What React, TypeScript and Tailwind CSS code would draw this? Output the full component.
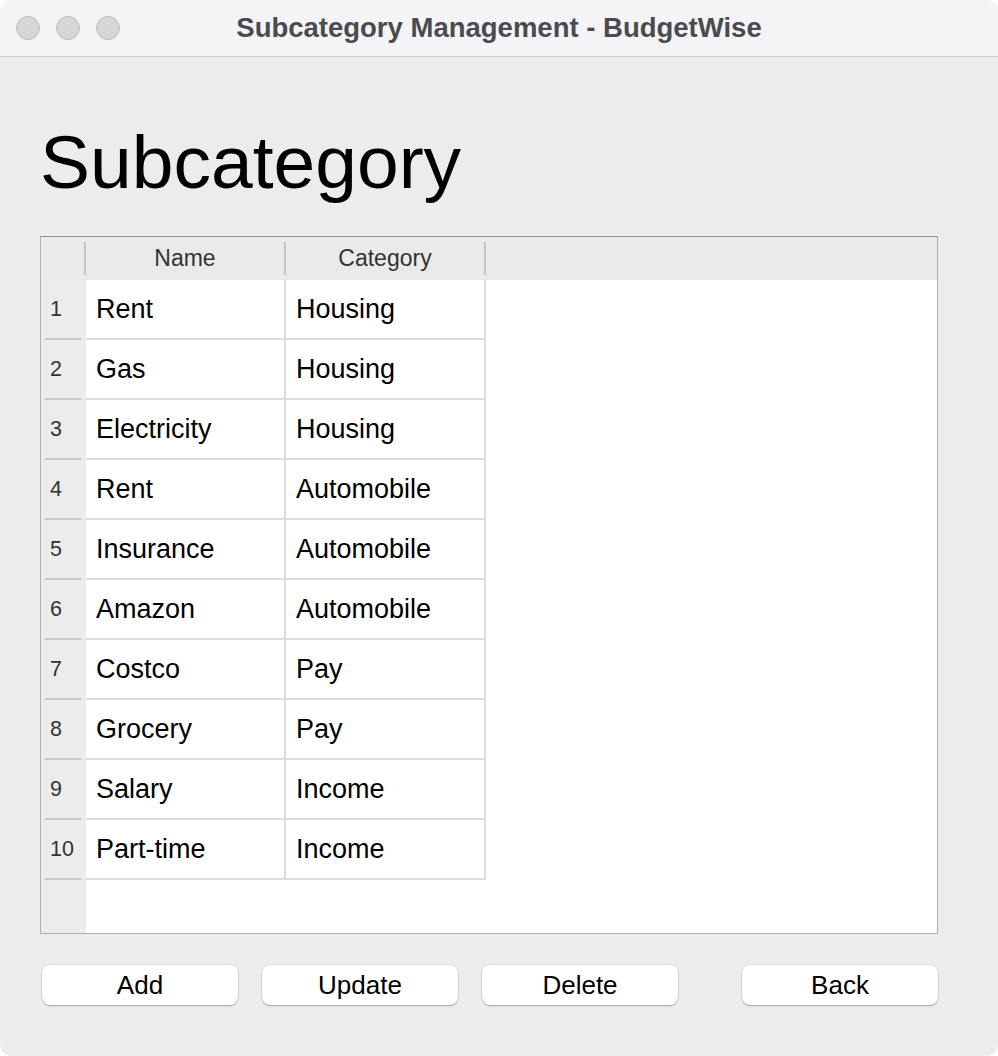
import React from "react";

const ROWS: [string, string][] = [
  ["Rent", "Housing"],
  ["Gas", "Housing"],
  ["Electricity", "Housing"],
  ["Rent", "Automobile"],
  ["Insurance", "Automobile"],
  ["Amazon", "Automobile"],
  ["Costco", "Pay"],
  ["Grocery", "Pay"],
  ["Salary", "Income"],
  ["Part-time", "Income"],
];

const FONT = { fontFamily: "'Liberation Sans', Arial, sans-serif" };

function Button({ label }: { label: string }) {
  return (
    <button className="h-[40px] w-[196px] rounded-[8px] bg-white text-[26px] leading-none text-black shadow-[0_1px_1.5px_rgba(0,0,0,0.25),0_0_0_0.5px_rgba(0,0,0,0.12)]">
      {label}
    </button>
  );
}

export default function App() {
  return (
    <div className="min-h-screen bg-white" style={FONT}>
      <div className="flex h-[1056px] w-[998px] flex-col overflow-hidden rounded-[12px] bg-[#ececec]">
        {/* Title bar */}
        <div className="grid h-[57px] shrink-0 grid-cols-[1fr_auto_1fr] items-center border-b border-[#cfcfd2] bg-[#f4f4f7]">
          <div className="flex gap-[16px] pl-[16px]">
            <span className="h-[24px] w-[24px] rounded-full border border-[#bdbdc1] bg-[#d6d6d9]" />
            <span className="h-[24px] w-[24px] rounded-full border border-[#bdbdc1] bg-[#d6d6d9]" />
            <span className="h-[24px] w-[24px] rounded-full border border-[#bdbdc1] bg-[#d6d6d9]" />
          </div>
          <div className="text-[27.5px] font-bold text-[#4b4b4f]">
            Subcategory Management - BudgetWise
          </div>
          <div />
        </div>

        {/* Body */}
        <div className="flex flex-col px-[40px]">
          <h1 className="mt-[68px] text-[75px] leading-none text-black">Subcategory</h1>

          {/* Table */}
          <div className="mt-[36px] flex h-[698px] w-[898px] flex-col border border-[#b0b0b0] border-t-[#8e8e8e]">
            {/* Header */}
            <div className="flex h-[43px] shrink-0 items-center bg-[#eaeaea] text-[23px] text-[#333]">
              <div className="w-[43px]" />
              <div className="h-[33px] w-[2px] bg-[#c4c4c4]" />
              <div className="w-[198px] text-center">Name</div>
              <div className="h-[33px] w-[2px] bg-[#c4c4c4]" />
              <div className="w-[198px] text-center">Category</div>
              <div className="h-[33px] w-[2px] bg-[#c4c4c4]" />
            </div>

            {/* Rows */}
            <div className="flex flex-1">
              <div className="w-[45px] shrink-0 bg-[#ececec]">
                {ROWS.map((_, i) => (
                  <div key={i} className="flex h-[60px] flex-col">
                    <div className="flex flex-1 items-center pl-[9px] text-[21.5px] text-[#333]">
                      {i + 1}
                    </div>
                    <div className="ml-[4px] h-[2px] w-[36px] bg-[#c8c8c8]" />
                  </div>
                ))}
              </div>
              <div className="flex-1 bg-white">
                {ROWS.map(([name, cat], i) => (
                  <div key={i} className="flex h-[60px] text-[27px] leading-none text-black">
                    <div className="flex w-[200px] items-center border-r-2 border-b-2 border-[#dcdcdc] pl-[10px]">
                      {name}
                    </div>
                    <div className="flex w-[200px] items-center border-r-2 border-b-2 border-[#dcdcdc] pl-[10px]">
                      {cat}
                    </div>
                  </div>
                ))}
              </div>
            </div>
          </div>

          {/* Buttons */}
          <div className="mt-[31px] ml-[2px] flex w-[896px] justify-between">
            <div className="flex gap-[24px]">
              <Button label="Add" />
              <Button label="Update" />
              <Button label="Delete" />
            </div>
            <Button label="Back" />
          </div>
        </div>
      </div>
    </div>
  );
}
